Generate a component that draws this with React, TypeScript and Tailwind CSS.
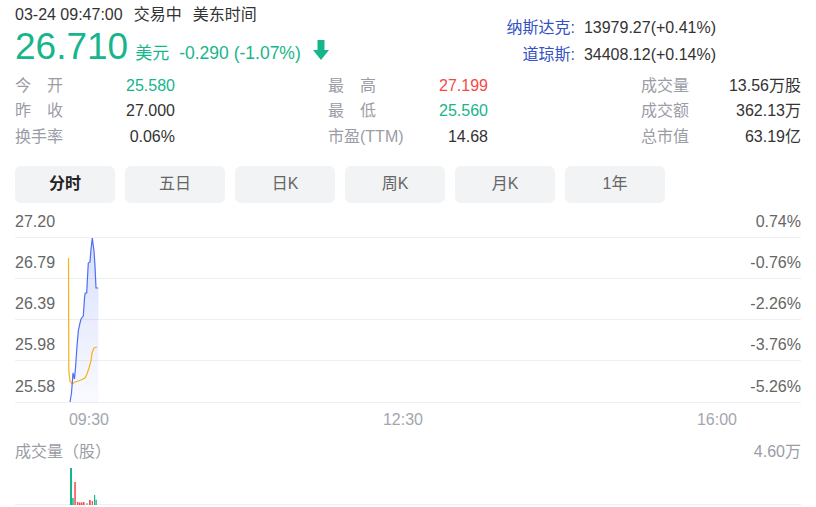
import React from "react";

const GREEN = "#17b58c";
const RED = "#f74848";

const stats = [
  [
    { label: "今\u3000开", value: "25.580", color: "text-[#17b58c]" },
    { label: "最\u3000高", value: "27.199", color: "text-[#f74848]" },
    { label: "成交量", value: "13.56万股", color: "text-[#333]" },
  ],
  [
    { label: "昨\u3000收", value: "27.000", color: "text-[#333]" },
    { label: "最\u3000低", value: "25.560", color: "text-[#17b58c]" },
    { label: "成交额", value: "362.13万", color: "text-[#333]" },
  ],
  [
    { label: "换手率", value: "0.06%", color: "text-[#333]" },
    { label: "市盈(TTM)", value: "14.68", color: "text-[#333]" },
    { label: "总市值", value: "63.19亿", color: "text-[#333]" },
  ],
];

const tabs = ["分时", "五日", "日K", "周K", "月K", "1年"];

const gridRows = [
  ["27.20", "0.74%"],
  ["26.79", "-0.76%"],
  ["26.39", "-2.26%"],
  ["25.98", "-3.76%"],
  ["25.58", "-5.26%"],
];

const bluePts: [number, number][] = [
  [70, 401], [71.5, 392], [73, 372], [74.5, 378], [75.7, 364], [77, 345],
  [78.3, 330], [80, 322], [81, 318], [83.3, 315], [84.5, 297], [85.2, 292],
  [86.7, 292], [87.2, 282], [88.3, 262], [90, 261], [91, 248], [92.3, 237],
  [94, 250], [95, 265], [96, 287], [98.3, 287],
];

const orangePts: [number, number][] = [
  [68.5, 257], [68.8, 370], [70, 380], [72, 383], [75, 381], [78, 380],
  [81, 379], [83, 378], [85, 377], [87, 373], [89, 367], [91, 360],
  [92, 352], [94, 347], [97, 346],
];

const bars = [
  { x: 70, w: 2, top: 466, c: GREEN },
  { x: 72.2, w: 1.5, top: 496, c: GREEN },
  { x: 74.3, w: 1.5, top: 480, c: RED },
  { x: 77, w: 1.5, top: 500, c: RED },
  { x: 79, w: 1.5, top: 500.5, c: RED },
  { x: 81, w: 1.5, top: 500.5, c: RED },
  { x: 83, w: 1.5, top: 500, c: RED },
  { x: 86.5, w: 1, top: 501, c: GREEN },
  { x: 89, w: 1.7, top: 498, c: RED },
  { x: 91.7, w: 1.2, top: 499, c: RED },
  { x: 94, w: 1.2, top: 493, c: GREEN },
  { x: 95.5, w: 1.3, top: 497.7, c: GREEN },
];

const toPath = (pts: [number, number][]) =>
  pts.map(([x, y], i) => `${i === 0 ? "M" : "L"}${x} ${y}`).join(" ");

export default function App() {
  const fill = `${toPath(bluePts)} L98.3 402 L70 402 Z`;

  return (
    <div className="w-[816px] h-[507px] overflow-hidden bg-white px-[15px] font-['Liberation_Sans','Noto_Sans_CJK_SC',sans-serif] text-[#333]">
      {/* header */}
      <div className="flex justify-between">
        <div className="pt-[5px]">
          <div className="text-[16px] leading-[20px] text-[#333]">
            03-24 09:47:00<span className="ml-[11px]">交易中</span>
            <span className="ml-[11px]">美东时间</span>
          </div>
          <div className="flex items-baseline">
            <span className="text-[37px] leading-[44px] text-[#17b58c]">26.710</span>
            <span className="ml-[7px] text-[17px] text-[#17b58c]">美元</span>
            <span className="ml-[10px] text-[17.5px] text-[#17b58c]">-0.290 (-1.07%)</span>
            <svg width="16" height="20" viewBox="0 0 16 20" className="ml-[12px] self-center mt-[6px] shrink-0">
              <path d="M4.5 0h7v10h4.5l-8 10-8-10h4.5z" fill={GREEN} />
            </svg>
          </div>
        </div>
        <div className="mr-[85px] pt-[15px] grid grid-cols-[auto_auto] text-[16px] leading-[26px]">
          <span className="text-right text-[#3553c4]">纳斯达克:</span>
          <span className="ml-[9px]">13979.27(+0.41%)</span>
          <span className="text-right text-[#3553c4]">道琼斯:</span>
          <span className="ml-[9px]">34408.12(+0.14%)</span>
        </div>
      </div>

      {/* stats */}
      <div className="mt-[4px] flex flex-col">
        {stats.map((row, i) => (
          <div key={i} className="grid grid-cols-[160px_160px_160px] justify-between h-[25.5px] items-center text-[16px]">
            {row.map((s) => (
              <div key={s.label} className="flex justify-between">
                <span className="text-[#9a9ca6]">{s.label}</span>
                <span className={s.color}>{s.value}</span>
              </div>
            ))}
          </div>
        ))}
      </div>

      {/* tabs */}
      <div className="mt-[16px] flex gap-[10px]">
        {tabs.map((t, i) => (
          <div
            key={t}
            className={`w-[100px] h-[37px] rounded-[6px] bg-[#f2f3f5] flex items-center justify-center text-[16px] ${
              i === 0 ? "font-bold text-[#222]" : "text-[#666]"
            }`}
          >
            {t}
          </div>
        ))}
      </div>

      {/* price chart */}
      <div className="relative mt-[4px]">
        {gridRows.map(([l, r], i) => (
          <div
            key={l}
            className={`flex justify-between items-end border-b border-[#eeeff2] pb-[6px] text-[16px] leading-[18px] text-[#666] ${
              i === 0 ? "h-[31px]" : "h-[41.25px]"
            }`}
          >
            <span>{l}</span>
            <span>{r}</span>
          </div>
        ))}
        <svg
          className="absolute left-0 top-0"
          width="785"
          height="196"
          viewBox="15 206 785 196"
        >
          <defs>
            <linearGradient id="gf" x1="0" y1="0" x2="0" y2="1">
              <stop offset="0" stopColor="#4e6ef2" stopOpacity="0.22" />
              <stop offset="1" stopColor="#4e6ef2" stopOpacity="0.03" />
            </linearGradient>
          </defs>
          <path d={fill} fill="url(#gf)" />
          <path d={toPath(orangePts)} fill="none" stroke="#f5b317" strokeWidth="1.2" />
          <path d={toPath(bluePts)} fill="none" stroke="#4e6ef2" strokeWidth="1.2" />
        </svg>
      </div>

      {/* time axis */}
      <div className="flex gap-[272px] ml-[53px] h-[34px] items-center text-[16px] text-[#a3a6b0]">
        <span className="w-[42px] text-center">09:30</span>
        <span className="w-[42px] text-center">12:30</span>
        <span className="w-[42px] text-center">16:00</span>
      </div>

      {/* volume */}
      <div className="flex justify-between text-[16px] leading-[20px] text-[#9a9ca6] mt-[5px]">
        <span>成交量（股）</span>
        <span>4.60万</span>
      </div>
      <div className="relative h-[43px] border-b border-[#eeeff2]">
        <svg className="absolute left-0 top-0" width="785" height="43" viewBox="15 460 785 43">
          {bars.map((b, i) => (
            <rect key={i} x={b.x} y={b.top} width={b.w} height={503 - b.top} fill={b.c} />
          ))}
        </svg>
      </div>
    </div>
  );
}
